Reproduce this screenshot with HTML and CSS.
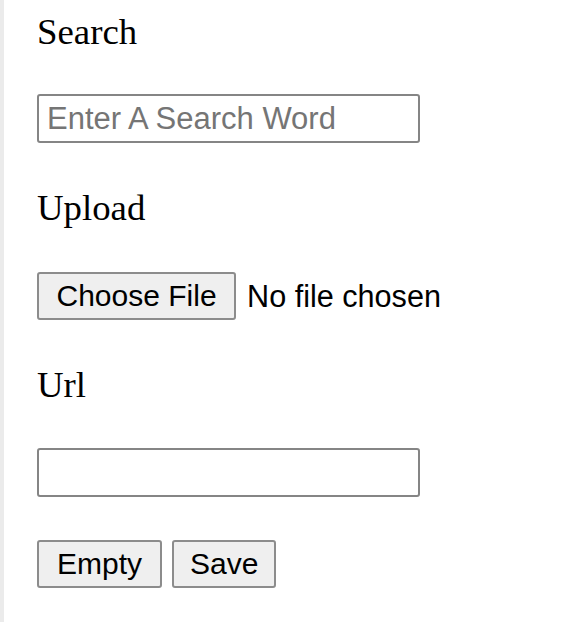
FILE: index.html
```html
<!DOCTYPE html>
<html lang="en">
<head>
<meta charset="utf-8">
<title>Search form</title>
<link rel="stylesheet" href="styles.css">
</head>
<body>
<div class="page">
  <form class="form">
    <label class="label label-search" for="search">Search</label>
    <input class="text-input gap-42" id="search" type="text" placeholder="Enter A Search Word">
    <label class="label gap-44">Upload</label>
    <div class="file-row gap-44">
      <span class="btn btn-file">Choose File</span>
      <span class="file-status">No file chosen</span>
    </div>
    <label class="label gap-44" for="url">Url</label>
    <input class="text-input gap-43" id="url" type="text">
    <div class="actions gap-43">
      <button type="button" class="btn btn-empty">Empty</button>
      <button type="button" class="btn">Save</button>
    </div>
  </form>
</div>
</body>
</html>
```

FILE: styles.css
```css
html, body {
  margin: 0;
  padding: 0;
  background: #ffffff;
}

body {
  height: 622px;
}

.page {
  height: 100%;
  border-left: 4px solid #ebebeb;
  box-sizing: border-box;
  padding-left: 33px;
  padding-top: 11px;
}

.form {
  display: flex;
  flex-direction: column;
  align-items: flex-start;
}

.label {
  font-family: "Liberation Serif", "Times New Roman", serif;
  font-size: 36.8px;
  line-height: 41px;
  color: #000;
}

.gap-42 { margin-top: 42px; }
.gap-43 { margin-top: 43px; }
.gap-44 { margin-top: 44px; }

.text-input {
  box-sizing: border-box;
  width: 383px;
  height: 49px;
  border: 2px solid #858585;
  border-radius: 3px;
  padding: 0 8px;
  font-family: "Liberation Sans", Arial, sans-serif;
  font-size: 31px;
  color: #000;
  background: #fff;
  outline: none;
}

.text-input::placeholder {
  color: #757575;
}

.btn {
  box-sizing: border-box;
  height: 48px;
  display: inline-flex;
  align-items: center;
  padding: 0 16px;
  border: 2px solid #8c8c8c;
  border-radius: 3px;
  background: #efefef;
  font-family: "Liberation Sans", Arial, sans-serif;
  font-size: 30px;
  color: #000;
  margin: 0;
}

.btn-file {
  padding: 0 17.5px;
}

.btn-empty {
  padding: 0 18px;
}

.file-row {
  display: flex;
  align-items: center;
  gap: 11px;
}

.file-status {
  font-family: "Liberation Sans", Arial, sans-serif;
  font-size: 30.6px;
  color: #000;
}

.actions {
  display: flex;
  gap: 10px;
}
```
